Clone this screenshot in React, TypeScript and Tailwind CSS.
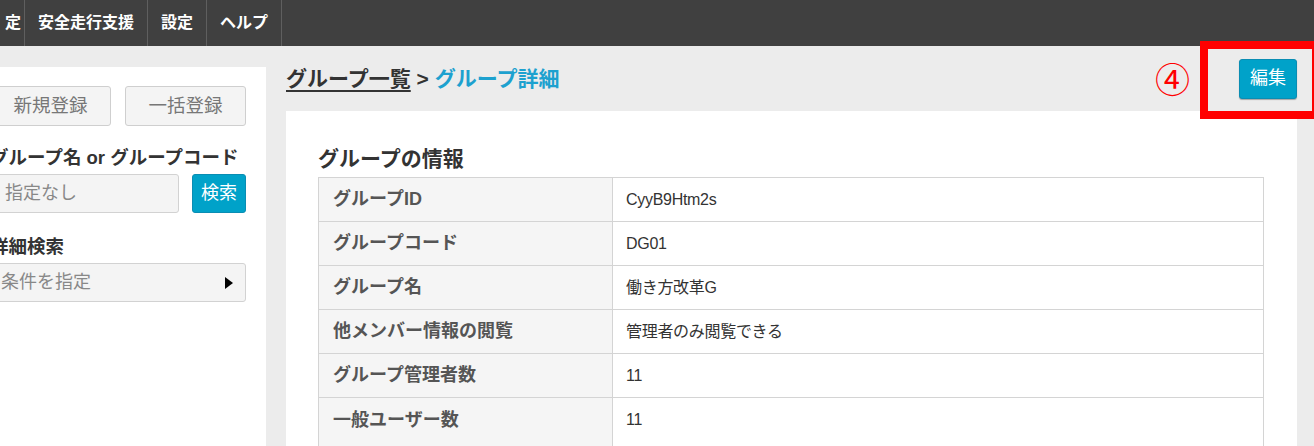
import React from "react";

const navItems = ["定", "安全走行支援", "設定", "ヘルプ"];

const rows = [
  { label: "グループID", value: "CyyB9Htm2s" },
  { label: "グループコード", value: "DG01" },
  { label: "グループ名", value: "働き方改革G" },
  { label: "他メンバー情報の閲覧", value: "管理者のみ閲覧できる" },
  { label: "グループ管理者数", value: "11" },
  { label: "一般ユーザー数", value: "11" },
];

const font = "font-['Liberation_Sans','Noto_Sans_CJK_JP',sans-serif]";

function TopNav() {
  return (
    <nav className="flex h-[46px] bg-[#404040] text-white">
      {navItems.map((item, i) => (
        <div
          key={item}
          className={`flex items-center border-r border-[#5f5f5f] text-[16px] font-bold ${
            i === 0 ? "w-[25px] justify-end pr-[3px]" : "px-[13px]"
          }`}
        >
          {item}
        </div>
      ))}
    </nav>
  );
}

function Sidebar() {
  return (
    <aside className="mt-[21px] w-[266px] shrink-0 bg-white pt-[19px]">
      <div className="-ml-[10px] w-[256px]">
        <div className="flex gap-[14px]">
          <button className="h-[40px] w-[121px] rounded-[3px] border border-[#cfcfcf] bg-[#f4f4f4] text-[18.5px] text-[#777]">
            新規登録
          </button>
          <button className="h-[40px] w-[121px] rounded-[3px] border border-[#cfcfcf] bg-[#f4f4f4] text-[18.5px] text-[#777]">
            一括登録
          </button>
        </div>

        <div className="mt-[19px] text-[18.5px] font-bold leading-[26px] text-[#333]">
          グループ名 or グループコード
        </div>
        <div className="mt-[3px] flex gap-[13px]">
          <div className="flex h-[39px] w-[189px] items-center rounded-[3px] border border-[#d2d2d2] bg-[#f4f4f4] pl-[14px] text-[18px] text-[#888]">
            指定なし
          </div>
          <button className="h-[39px] w-[54px] rounded-[3px] border border-[#0a8db3] bg-[#00a2c9] text-[18px] text-white">
            検索
          </button>
        </div>

        <div className="mt-[21px] text-[18.5px] font-bold leading-[26px] text-[#333]">
          詳細検索
        </div>
        <div className="mt-[3px] flex h-[39px] items-center justify-between rounded-[3px] border border-[#d2d2d2] bg-[#f4f4f4] pl-[10px] pr-[12px] text-[18px] text-[#888]">
          <span>条件を指定</span>
          <span className="h-0 w-0 border-y-[6px] border-l-[8px] border-y-transparent border-l-black" />
        </div>
      </div>
    </aside>
  );
}

function DetailTable() {
  return (
    <table className="w-full border-collapse border-x border-t border-[#cfcfcf]">
      <tbody>
        {rows.map((row, i) => (
          <tr key={row.label} className={i === rows.length - 1 ? "h-[52px] align-top" : "h-[44px]"}>
            <th
              className={`w-[294px] border-x border-t border-[#d4d4d4] bg-[#f5f5f5] pl-[14px] text-left text-[18px] font-bold text-[#555] ${
                i === rows.length - 1 ? "pt-[9px]" : ""
              }`}
            >
              {row.label}
            </th>
            <td
              className={`border-x border-t border-[#d4d4d4] bg-white pl-[13px] text-[16px] tracking-[-0.3px] text-[#333] ${
                i === rows.length - 1 ? "pt-[10px]" : ""
              }`}
            >
              {row.value}
            </td>
          </tr>
        ))}
      </tbody>
    </table>
  );
}

export default function App() {
  return (
    <div className={`relative h-[446px] w-[1314px] overflow-hidden bg-[#ececec] ${font}`}>
      <TopNav />
      <div className="flex">
        <Sidebar />
        <main className="ml-[20px] mr-[17px] flex-1">
          <div className="flex h-[65px] items-center justify-between">
            <div className="text-[21px] font-bold">
              <span className="text-[#333] underline underline-offset-[4px]">グループ一覧</span>
              <span className="text-[#333]"> &gt; </span>
              <span className="text-[#1da1cf]">グループ詳細</span>
            </div>
            <div className="flex items-center">
              <span className="mr-[49px] mt-[4px] text-[35px] leading-none text-[#ff0000]">④</span>
              <button className="h-[40px] w-[58px] rounded-[3px] border border-[#0a8db3] bg-[#00a2c9] text-[18px] text-white shadow-[0_1px_1px_rgba(0,0,0,0.3)]">
                編集
              </button>
            </div>
          </div>
          <section className="min-h-[340px] bg-white pl-[32px] pr-[33px] pt-[33px]">
            <h2 className="mb-[3px] text-[21px] font-bold leading-[30px] text-[#333]">グループの情報</h2>
            <DetailTable />
          </section>
        </main>
      </div>
      {/* annotation box round the edit button */}
      <div className="pointer-events-none absolute left-[1200px] top-[41px] h-[78px] w-[120px] border-[8px] border-[#ff0000]" />
    </div>
  );
}
